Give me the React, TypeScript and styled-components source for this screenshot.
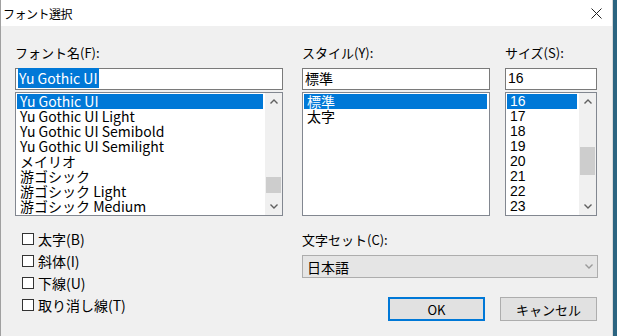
import styled, { createGlobalStyle } from "styled-components";

const GlobalStyle = createGlobalStyle`
  body {
    margin: 0;
    background: #2b6480;
    font-family: "Noto Sans CJK JP", "Noto Sans", sans-serif;
  }
`;

const Dialog = styled.div`
  width: 613px;
  height: 336px;
  box-sizing: border-box;
  background: #f0f0f0;
  border-left: 1px solid #a0a0a0;
  border-right: 1px solid #d8d8d8;
  display: flex;
  flex-direction: column;
  color: #000;
`;

const TitleBar = styled.div`
  height: 26px;
  flex-shrink: 0;
  background: #fff;
  display: flex;
  align-items: center;
  justify-content: space-between;
  padding: 0 10px 0 2px;
  font-size: 12px;
  letter-spacing: -0.5px;
`;

const Body = styled.div`
  padding: 19px 14px 0 14px;
  display: flex;
  flex-direction: column;
`;

const TopRow = styled.div`
  display: flex;
`;

const Column = styled.div<{ $width: number; $gap?: number }>`
  width: ${(p) => p.$width}px;
  margin-left: ${(p) => p.$gap ?? 0}px;
  display: flex;
  flex-direction: column;
`;

const Label = styled.div`
  height: 16px;
  line-height: 16px;
  font-size: 13px;
  margin-bottom: 7px;
`;

const TextBox = styled.div<{ $mono?: boolean }>`
  height: 22px;
  box-sizing: border-box;
  border: 1px solid #7a7a7a;
  background: #fff;
  padding: 0 2px;
  font-size: 14px;
  line-height: 19px;
  margin-bottom: 2px;
  font-family: ${(p) =>
    p.$mono ? `"Liberation Sans", sans-serif` : `"Noto Sans CJK JP", sans-serif`};
`;

const Selected = styled.span`
  background: #0078d7;
  color: #fff;
  padding: 0 1px;
`;

const ListBox = styled.div<{ $num?: boolean }>`
  height: 124px;
  box-sizing: border-box;
  border: 1px solid #828790;
  background: #fff;
  padding: 1px 0 1px 1px;
  display: flex;
  font-family: ${(p) =>
    p.$num ? `"Liberation Sans", sans-serif` : `"Noto Sans CJK JP", sans-serif`};
`;

const Items = styled.div`
  flex: 1;
  padding-right: 2px;
  overflow: hidden;
`;

const Item = styled.div<{ $active?: boolean }>`
  height: 15px;
  line-height: 15px;
  font-size: 14px;
  padding-left: 3px;
  white-space: nowrap;
  background: ${(p) => (p.$active ? "#0078d7" : "transparent")};
  color: ${(p) => (p.$active ? "#fff" : "#000")};
`;

const ScrollBar = styled.div`
  width: 17px;
  margin-top: -1px;
  margin-bottom: -1px;
  background: #f0f0f0;
  display: flex;
  flex-direction: column;
`;

const Arrow = styled.div`
  height: 17px;
  display: flex;
  align-items: center;
  justify-content: center;
`;

const Track = styled.div`
  flex: 1;
`;

const Thumb = styled.div<{ $top: number; $size: number }>`
  margin: ${(p) => p.$top}px 1px 0 1px;
  height: ${(p) => p.$size}px;
  background: #cdcdcd;
`;

const BottomRow = styled.div`
  display: flex;
`;

const Checks = styled.div`
  width: 280px;
  padding: 12px 0 0 7px;
  display: flex;
  flex-direction: column;
`;

const CheckRow = styled.div`
  height: 22px;
  display: flex;
  align-items: center;
  gap: 4px;
  font-size: 14px;
`;

const Box = styled.span`
  width: 12px;
  height: 12px;
  box-sizing: border-box;
  border: 1px solid #333;
  background: #fff;
`;

const Side = styled.div`
  width: 296px;
  padding-top: 16px;
  display: flex;
  flex-direction: column;
`;

const Combo = styled.div`
  height: 23px;
  box-sizing: border-box;
  border: 1px solid #adadad;
  background: #e5e5e5;
  display: flex;
  align-items: center;
  justify-content: space-between;
  padding: 0 4px 0 4px;
  font-size: 14px;
`;

const Buttons = styled.div`
  margin-top: 19px;
  display: flex;
  justify-content: flex-end;
  gap: 15px;
  padding-right: 1px;
`;

const Button = styled.div<{ $default?: boolean }>`
  width: 97px;
  height: 24px;
  box-sizing: border-box;
  border: ${(p) => (p.$default ? "2px solid #0078d7" : "1px solid #adadad")};
  background: #e1e1e1;
  display: flex;
  align-items: center;
  justify-content: center;
  font-size: 13px;
`;

const Chevron = ({ up, color = "#606060" }: { up?: boolean; color?: string }) => (
  <svg width="8" height="5" viewBox="0 0 8 5">
    <path
      d={up ? "M0.5 4.5 L4 1 L7.5 4.5" : "M0.5 0.5 L4 4 L7.5 0.5"}
      fill="none"
      stroke={color}
      strokeWidth="1.4"
    />
  </svg>
);

const fonts = [
  "Yu Gothic UI",
  "Yu Gothic UI Light",
  "Yu Gothic UI Semibold",
  "Yu Gothic UI Semilight",
  "メイリオ",
  "游ゴシック",
  "游ゴシック Light",
  "游ゴシック Medium",
];

const sizes = ["16", "17", "18", "19", "20", "21", "22", "23"];

const effects = ["太字(B)", "斜体(I)", "下線(U)", "取り消し線(T)"];

function Scroll({ top, size }: { top: number; size: number }) {
  return (
    <ScrollBar>
      <Arrow>
        <Chevron up />
      </Arrow>
      <Track>
        <Thumb $top={top} $size={size} />
      </Track>
      <Arrow>
        <Chevron />
      </Arrow>
    </ScrollBar>
  );
}

export default function App() {
  return (
    <>
      <GlobalStyle />
      <Dialog>
        <TitleBar>
          <span>フォント選択</span>
          <svg width="11" height="11" viewBox="0 0 11 11">
            <path d="M0.5 0.5 L10.5 10.5 M10.5 0.5 L0.5 10.5" stroke="#222" strokeWidth="1" />
          </svg>
        </TitleBar>
        <Body>
          <TopRow>
            <Column $width={268}>
              <Label>フォント名(F):</Label>
              <TextBox>
                <Selected>Yu Gothic UI</Selected>
              </TextBox>
              <ListBox>
                <Items>
                  {fonts.map((f, i) => (
                    <Item key={f} $active={i === 0}>
                      {f}
                    </Item>
                  ))}
                </Items>
                <Scroll top={67} size={16} />
              </ListBox>
            </Column>
            <Column $width={188} $gap={19}>
              <Label>スタイル(Y):</Label>
              <TextBox>標準</TextBox>
              <ListBox>
                <Items>
                  <Item $active>標準</Item>
                  <Item>太字</Item>
                </Items>
              </ListBox>
            </Column>
            <Column $width={92} $gap={15}>
              <Label>サイズ(S):</Label>
              <TextBox $mono>16</TextBox>
              <ListBox $num>
                <Items>
                  {sizes.map((s, i) => (
                    <Item key={s} $active={i === 0}>
                      {s}
                    </Item>
                  ))}
                </Items>
                <Scroll top={37} size={28} />
              </ListBox>
            </Column>
          </TopRow>
          <BottomRow>
            <Checks>
              {effects.map((e) => (
                <CheckRow key={e}>
                  <Box />
                  {e}
                </CheckRow>
              ))}
            </Checks>
            <Side>
              <Label>文字セット(C):</Label>
              <Combo>
                <span>日本語</span>
                <Chevron color="#9a9a9a" />
              </Combo>
              <Buttons>
                <Button $default>OK</Button>
                <Button>キャンセル</Button>
              </Buttons>
            </Side>
          </BottomRow>
        </Body>
      </Dialog>
    </>
  );
}
